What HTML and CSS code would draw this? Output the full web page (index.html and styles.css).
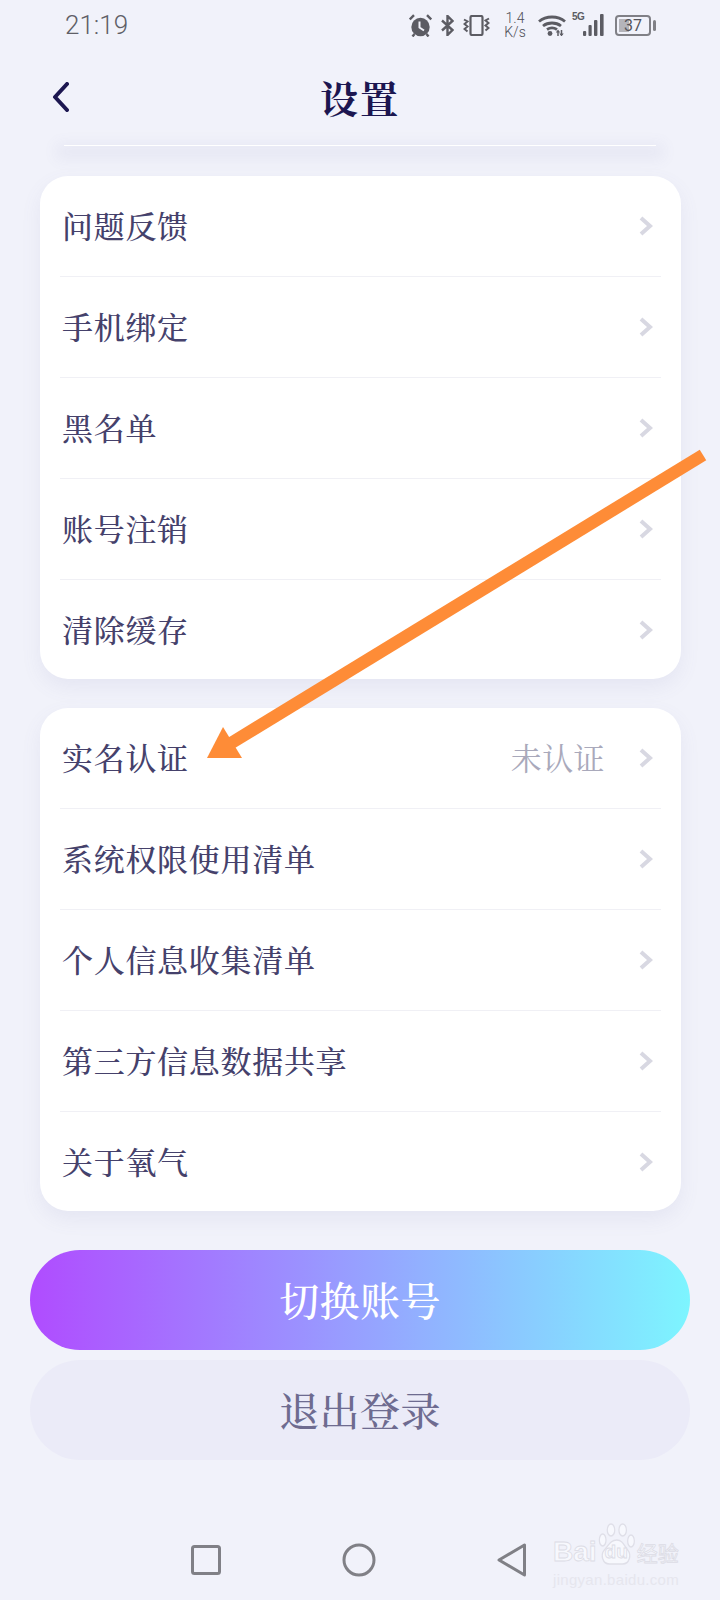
FILE: index.html
```html
<!DOCTYPE html>
<html>

<head>
    <meta charset="utf-8">
    <title>设置</title>
    <meta name="viewport" content="width=device-width,initial-scale=1,user-scalable=no">
    <link rel="stylesheet" href="styles.css">
</head>

<body>
    <div class="page">
        <div class="status">
            <div class="time">21:19</div>
            <div class="status-icons">
                <svg class="ic-alarm" width="23" height="23" viewBox="0 0 23 23">
                    <circle cx="11.5" cy="13" r="9.2" fill="#5c5c63"/>
                    <path d="M10.500 7.500v6l4.500 3" fill="none" stroke="#f1f2fa" stroke-width="2"/>
                    <path d="M.8 5.500 5 1.200M22.200 5.500 18 1.200M3.500 22.500l2-2.500M19.500 22.500l-2-2.500" fill="none" stroke="#5c5c63" stroke-width="2.400"/>
                </svg>
                <svg class="ic-bt" width="13" height="21" viewBox="0 0 13 21">
                    <path d="M1 5.500 11.500 15 6.500 20V1l5 5L1 15.500" fill="none" stroke="#5c5c63" stroke-width="2.400"/>
                </svg>
                <svg class="ic-vib" width="27" height="21" viewBox="0 0 27 21">
                    <rect x="7.500" y="1" width="12" height="19" rx="1.500" fill="none" stroke="#5c5c63" stroke-width="2.200"/>
                    <path d="M1 4.500l3.500 2-3 2.500 3 2.500-3 2.500 3 2.500M26 3.500l-3.500 2 3 2.500-3 2.500 3 2.500-3 2.500" fill="none" stroke="#5c5c63" stroke-width="2"/>
                </svg>
                <div class="speed">1.4<br>K/s</div>
                <svg class="ic-wifi" width="28" height="22" viewBox="0 0 28 22">
                    <path d="M1 7.500C8 1.500 20 1.500 27 7.500M5 12c5-4 13-4 18 0M9 15.500c3-2 7-2 10 0" fill="none" stroke="#5c5c63" stroke-width="2.800"/>
                    <circle cx="12" cy="19.500" r="2.400" fill="#5c5c63"/>
                    <path d="M20 17v5M23.500 16v5" stroke="#5c5c63" stroke-width="1.500"/>
                    <path d="M20 15.500l-2.200 3h4.400zM23.500 22.500l-2.200-3h4.400z" fill="#5c5c63"/>
                </svg>
                <div class="net">5G</div>
                <svg class="ic-signal" width="23" height="22" viewBox="0 0 23 22">
                    <rect x="0" y="17" width="3.200" height="5" rx="1" fill="#5c5c63"/>
                    <rect x="5.500" y="11" width="3.200" height="11" rx="1" fill="#5c5c63"/>
                    <rect x="11" y="6" width="3.400" height="16" rx="1" fill="#5c5c63"/>
                    <rect x="17" y="0" width="3.600" height="22" rx="1" fill="#5c5c63"/>
                </svg>
                <div class="battery">
                    <div class="battery-body">
                        <div class="battery-fill"></div>
                        <div class="battery-num">37</div>
                    </div>
                    <div class="battery-nub"></div>
                </div>
            </div>
        </div>

        <div class="nav">
            <svg class="back" width="17" height="30" viewBox="0 0 17 30">
                <path d="M15 2 3 15l12 13" fill="none" stroke="#1c1650" stroke-width="4" stroke-linecap="round" stroke-linejoin="round"/>
            </svg>
            <div class="title">设置</div>
        </div>

        <div class="card-stub"></div>

        <div class="card card-first">
            <div class="row">
                <div class="label">问题反馈</div>
                <svg class="more" width="14" height="20" viewBox="0 0 14 20"><path d="M2 2l9 8-9 8"/></svg>
            </div>
            <div class="row">
                <div class="label">手机绑定</div>
                <svg class="more" width="14" height="20" viewBox="0 0 14 20"><path d="M2 2l9 8-9 8"/></svg>
            </div>
            <div class="row">
                <div class="label">黑名单</div>
                <svg class="more" width="14" height="20" viewBox="0 0 14 20"><path d="M2 2l9 8-9 8"/></svg>
            </div>
            <div class="row">
                <div class="label">账号注销</div>
                <svg class="more" width="14" height="20" viewBox="0 0 14 20"><path d="M2 2l9 8-9 8"/></svg>
            </div>
            <div class="row">
                <div class="label">清除缓存</div>
                <svg class="more" width="14" height="20" viewBox="0 0 14 20"><path d="M2 2l9 8-9 8"/></svg>
            </div>
        </div>

        <div class="card card-second">
            <div class="row">
                <div class="label">实名认证</div>
                <div class="value">未认证</div>
                <svg class="more" width="14" height="20" viewBox="0 0 14 20"><path d="M2 2l9 8-9 8"/></svg>
            </div>
            <div class="row">
                <div class="label">系统权限使用清单</div>
                <svg class="more" width="14" height="20" viewBox="0 0 14 20"><path d="M2 2l9 8-9 8"/></svg>
            </div>
            <div class="row">
                <div class="label">个人信息收集清单</div>
                <svg class="more" width="14" height="20" viewBox="0 0 14 20"><path d="M2 2l9 8-9 8"/></svg>
            </div>
            <div class="row">
                <div class="label">第三方信息数据共享</div>
                <svg class="more" width="14" height="20" viewBox="0 0 14 20"><path d="M2 2l9 8-9 8"/></svg>
            </div>
            <div class="row">
                <div class="label">关于氧气</div>
                <svg class="more" width="14" height="20" viewBox="0 0 14 20"><path d="M2 2l9 8-9 8"/></svg>
            </div>
        </div>

        <div class="btn btn-switch">切换账号</div>
        <div class="btn btn-logout">退出登录</div>

        <div class="sysnav">
            <svg width="30" height="30" viewBox="0 0 30 30">
                <rect x="1.500" y="1.500" width="27" height="27" rx="2" fill="none" stroke="#808086" stroke-width="3"/>
            </svg>
            <svg width="34" height="34" viewBox="0 0 34 34">
                <circle cx="17" cy="17" r="15" fill="none" stroke="#808086" stroke-width="3"/>
            </svg>
            <svg width="30" height="34" viewBox="0 0 30 34">
                <path d="M27.500 2v30L2 17z" fill="none" stroke="#808086" stroke-width="3" stroke-linejoin="round"/>
            </svg>
        </div>

        <!-- annotation drawn on top of the screenshot -->
        <svg class="arrow" width="720" height="1600" viewBox="0 0 720 1600">
            <path d="M703 455 228 745" fill="none" stroke="#fe8c37" stroke-width="12.500"/>
            <path d="M207 758 223 727 242 758z" fill="#fe8c37"/>
        </svg>

        <div class="watermark">
            <svg class="paw" width="40" height="44" viewBox="0 0 48 44" preserveAspectRatio="none">
                <g fill="#f7f8fd" stroke="#dfdfe8" stroke-width="1.500">
                    <ellipse cx="8" cy="17" rx="4" ry="6"/>
                    <ellipse cx="18" cy="7" rx="4.500" ry="6"/>
                    <ellipse cx="32" cy="7" rx="4.500" ry="6"/>
                    <ellipse cx="42" cy="18" rx="4" ry="6"/>
                    <path d="M25 17c7 0 9 6 13 10 5 5 2 14-6 14H16C8 41 5 32 10 27c5-4 7-10 15-10z"/>
                </g>
            </svg>
            <div class="wm-top"><span>Bai</span><span class="wm-du">du</span><span class="wm-cn">经验</span></div>
            <div class="wm-url">jingyan.baidu.com</div>
        </div>
    </div>
</body>

</html>
```

FILE: styles.css
```css
* {
    box-sizing: border-box;
}

body {
    margin: 0;
    background: #f1f2fa;
    font-family: "Noto Serif CJK SC", "Noto Sans CJK SC", serif;
    color: #45416b;
}

.page {
    position: relative;
    width: 720px;
    height: 1600px;
    overflow: hidden;
}

.status {
    display: flex;
    align-items: center;
    justify-content: space-between;
    height: 50px;
    padding: 0 64px 0 65px;
}

.time {
    font-family: Roboto, sans-serif;
    font-weight: 300;
    font-size: 26px;
    color: #5f5f67;
}

.status-icons {
    display: flex;
    align-items: center;
}

.ic-bt,
.ic-vib {
    margin-left: 9px;
}

.speed {
    margin-left: 14px;
    width: 22px;
    font-family: Roboto, sans-serif;
    font-size: 14px;
    font-weight: 300;
    line-height: 14px;
    text-align: center;
    color: #4f4f56;
}

.ic-wifi {
    margin-left: 12px;
}

.net {
    align-self: flex-start;
    margin-left: 6px;
    width: 11px;
    font-family: "Liberation Sans", sans-serif;
    font-size: 10px;
    font-weight: 700;
    line-height: 12px;
    letter-spacing: -.5px;
    color: #5c5c63;
}

.battery {
    display: flex;
    align-items: center;
    margin-left: 9px;
}

.battery-body {
    position: relative;
    width: 36px;
    height: 21px;
    padding: 2px;
    border: 2px solid #808086;
    border-radius: 4px;
}

.battery-fill {
    width: 10px;
    height: 100%;
    background: #b4b4ba;
}

.battery-num {
    position: absolute;
    top: 0;
    left: 0;
    width: 100%;
    font-family: Roboto, sans-serif;
    font-size: 16px;
    line-height: 17px;
    text-align: center;
    color: #55555c;
}

.battery-nub {
    width: 3px;
    height: 11px;
    margin-left: 2px;
    border-radius: 2px;
    background: #808086;
}

.nav {
    position: relative;
    display: flex;
    align-items: center;
    justify-content: center;
    height: 95px;
    padding-bottom: 3px;
}

.back {
    position: absolute;
    top: 32px;
    left: 52px;
}

.title {
    font-size: 38px;
    font-weight: 700;
    letter-spacing: 2px;
    color: #1c1650;
}

.card-stub {
    height: 1px;
    margin: 0 64px;
    background: #fff;
    box-shadow: 0 6px 14px 8px rgba(110, 110, 170, .07);
}

.card {
    margin: 0 39px 0 40px;
    padding: 0 20px;
    border-radius: 28px;
    background: #fff;
    box-shadow: 0 8px 20px rgba(110, 110, 170, .09);
}

.card-first {
    margin-top: 30px;
}

.card-second {
    margin-top: 29px;
}

.row {
    display: flex;
    align-items: center;
    height: 101px;
    padding-bottom: 3px;
    border-bottom: 1px solid #f0f0f5;
}

.row:last-child {
    height: 99px;
    padding-bottom: 2px;
    border-bottom: 0;
}

.label {
    flex: 1;
    padding-left: 2px;
    font-size: 31px;
    font-weight: 500;
    letter-spacing: .7px;
}

.value {
    margin-right: 34px;
    font-size: 31px;
    letter-spacing: .4px;
    color: #a9a9bb;
}

.more {
    margin-right: 8px;
    margin-top: 3px;
}

.more path {
    fill: none;
    stroke: #d8d8e2;
    stroke-width: 4;
}

.btn {
    height: 100px;
    margin: 0 30px;
    border-radius: 50px;
    font-size: 40px;
    font-weight: 500;
    letter-spacing: .4px;
    line-height: 98px;
    text-align: center;
}

.btn-switch {
    margin-top: 39px;
    background: linear-gradient(90deg, #b04cff, #7df5ff);
    color: #fff;
}

.btn-logout {
    margin-top: 10px;
    background: #ebebf8;
    color: #6e6b90;
}

.sysnav {
    display: flex;
    align-items: center;
    justify-content: space-between;
    margin-top: 83px;
    padding: 0 193px 0 191px;
}

.arrow {
    position: absolute;
    top: 0;
    left: 0;
}

.watermark {
    position: absolute;
    top: 1523px;
    left: 553px;
    width: 130px;
    font-family: "Liberation Sans", "Noto Sans CJK SC", sans-serif;
    color: #f7f8fd;
}

.paw {
    position: absolute;
    top: 0;
    left: 43px;
}

.wm-top {
    position: relative;
    display: flex;
    align-items: center;
    height: 26px;
    margin-top: 16px;
    font-size: 28px;
    font-weight: 700;
    -webkit-text-stroke: .8px #dcdce5;
}

.wm-du {
    margin-left: 8px;
    font-size: 19px;
}

.wm-cn {
    margin-left: 9px;
    font-size: 21px;
    font-weight: 400;
}

.wm-url {
    margin-top: 6px;
    font-size: 15px;
    letter-spacing: .3px;
    white-space: nowrap;
    color: #e6e6ee;
}
```
